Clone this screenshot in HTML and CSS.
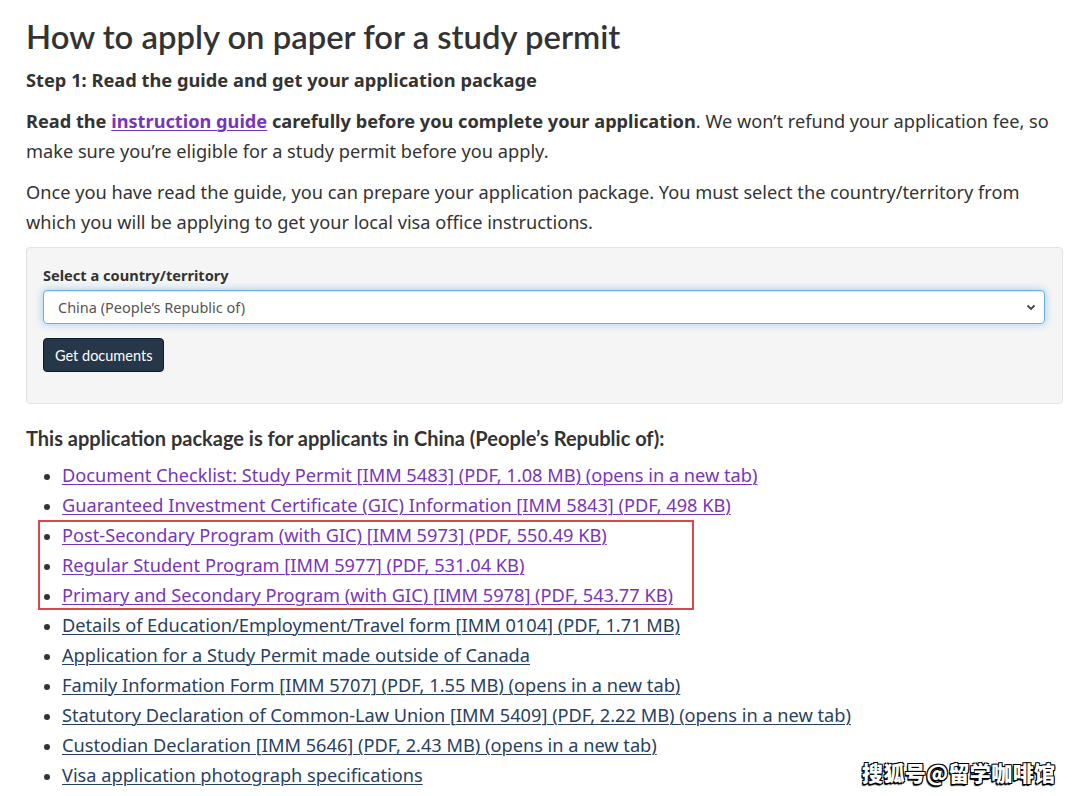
FILE: index.html
```html
<!DOCTYPE html>
<html lang="en">
<head>
<meta charset="utf-8">
<title>How to apply on paper for a study permit</title>
<link rel="stylesheet" href="styles.css">
</head>
<body>
<main class="page">
  <h1 class="title">How to apply on paper for a study permit</h1>
  <h2 class="step">Step 1: Read the guide and get your application package</h2>
  <p class="para"><strong>Read the <a class="visited" href="#">instruction guide</a> carefully before you complete your application</strong>. We won’t refund your application fee, so make sure you’re eligible for a study permit before you apply.</p>
  <p class="para">Once you have read the guide, you can prepare your application package. You must select the country/territory from which you will be applying to get your local visa office instructions.</p>
  <div class="well">
    <label class="label" for="country">Select a country/territory</label>
    <div class="select">
      <span class="select-text">China (People’s Republic of)</span>
      <svg class="chev" width="10" height="8" viewBox="0 0 10 8"><path d="M1.5 2.5 L5 6 L8.5 2.5" fill="none" stroke="#444" stroke-width="1.8"/></svg>
    </div>
    <button class="btn" type="button">Get documents</button>
  </div>
  <h3 class="pkg">This application package is for applicants in China (People’s Republic of):</h3>
  <ul class="docs">
    <li><a class="visited" href="#">Document Checklist: Study Permit [IMM 5483] (PDF, 1.08 MB) (opens in a new tab)</a></li>
    <li><a class="visited" href="#">Guaranteed Investment Certificate (GIC) Information [IMM 5843] (PDF, 498 KB)</a></li>
    <li class="hl-group">
      <div class="hl">
        <ul class="docs inner">
          <li><a class="visited" href="#">Post-Secondary Program (with GIC) [IMM 5973] (PDF, 550.49 KB)</a></li>
          <li><a class="visited" href="#">Regular Student Program [IMM 5977] (PDF, 531.04 KB)</a></li>
          <li><a class="visited" href="#">Primary and Secondary Program (with GIC) [IMM 5978] (PDF, 543.77 KB)</a></li>
        </ul>
      </div>
    </li>
    <li><a href="#">Details of Education/Employment/Travel form [IMM 0104] (PDF, 1.71 MB)</a></li>
    <li><a href="#">Application for a Study Permit made outside of Canada</a></li>
    <li><a href="#">Family Information Form [IMM 5707] (PDF, 1.55 MB) (opens in a new tab)</a></li>
    <li><a href="#">Statutory Declaration of Common-Law Union [IMM 5409] (PDF, 2.22 MB) (opens in a new tab)</a></li>
    <li><a href="#">Custodian Declaration [IMM 5646] (PDF, 2.43 MB) (opens in a new tab)</a></li>
    <li><a href="#">Visa application photograph specifications</a></li>
  </ul>
  <div class="watermark">搜狐号@留学咖啡馆</div>
</main>
</body>
</html>
```
FILE: styles.css
```css
html, body {
  margin: 0;
  padding: 0;
  background: #fff;
}
body {
  font-family: "Noto Sans", "Liberation Sans", sans-serif;
  color: #333;
  width: 1080px;
  height: 796px;
  overflow: hidden;
}
.page {
  position: relative;
  padding: 0 17px 0 26px;
  height: 796px;
}
.title {
  font-family: Lato, "Liberation Sans", sans-serif;
  font-weight: 600;
  font-size: 32.8px;
  line-height: 40px;
  margin: 0;
  padding-top: 17px;
  color: #333;
}
.step {
  font-size: 18.25px;
  font-weight: 700;
  line-height: 26px;
  margin: 10px 0 0;
  color: #333;
}
.para {
  font-size: 18.2px;
  line-height: 30px;
  margin: 13px 0 0;
}
.para + .para {
  margin-top: 11px;
}
a {
  color: #284162;
  text-decoration: underline;
  text-underline-offset: 2px;
  text-decoration-thickness: 1px;
}
a.visited {
  color: #7834bc;
}
.well {
  margin-top: 10px;
  background: #f5f5f5;
  border: 1px solid #e3e3e3;
  border-radius: 4px;
  padding: 17px 17px 31px 16px;
  display: flex;
  flex-direction: column;
  align-items: flex-start;
}
.label {
  font-size: 14.6px;
  font-weight: 700;
  line-height: 20px;
  color: #333;
}
.select {
  margin-top: 5px;
  align-self: stretch;
  height: 32px;
  background: #fff;
  border: 1px solid #66afe9;
  border-radius: 4px;
  box-shadow: inset 0 1px 1px rgba(0,0,0,.075), 0 0 8px rgba(102,175,233,.6);
  display: flex;
  align-items: center;
  justify-content: space-between;
  padding: 0 8px 0 14px;
}
.select-text {
  font-size: 14.5px;
  color: #555;
}
.btn {
  margin-top: 14px;
  background: #26374a;
  color: #fff;
  font-family: Lato, "Liberation Sans", sans-serif;
  font-size: 14.5px;
  border: 1px solid #091c2d;
  border-radius: 4px;
  height: 34px;
  padding: 0 11px;
  cursor: pointer;
}
.pkg {
  font-family: Lato, "Liberation Sans", sans-serif;
  font-weight: 700;
  font-size: 20px;
  line-height: 28px;
  margin: 20px 0 0;
  color: #333;
}
.docs {
  list-style: disc;
  margin: 8px 0 0;
  padding-left: 36px;
  font-size: 18.2px;
  line-height: 30px;
}
.docs li::marker {
  color: #333;
  font-size: 16px;
}
.hl-group {
  list-style: none;
}
.hl {
  margin-left: -24px;
  width: 656px;
  outline: 2px solid #d9474a;
  outline-offset: -2px;
}
.docs.inner {
  margin: 0;
  padding-left: 24px;
}
.watermark {
  position: absolute;
  left: 862px;
  top: 757px;
  font-family: "Noto Sans CJK SC", sans-serif;
  font-weight: 900;
  font-size: 21px;
  line-height: 30px;
  color: #fff;
  letter-spacing: 0.4px;
  text-shadow: -1px 1px 0 #000, 1px -1px 0 #000, -1px -1px 0 #000, 1px 1px 0 #000, -1px 2px 1px #000;
}
```
